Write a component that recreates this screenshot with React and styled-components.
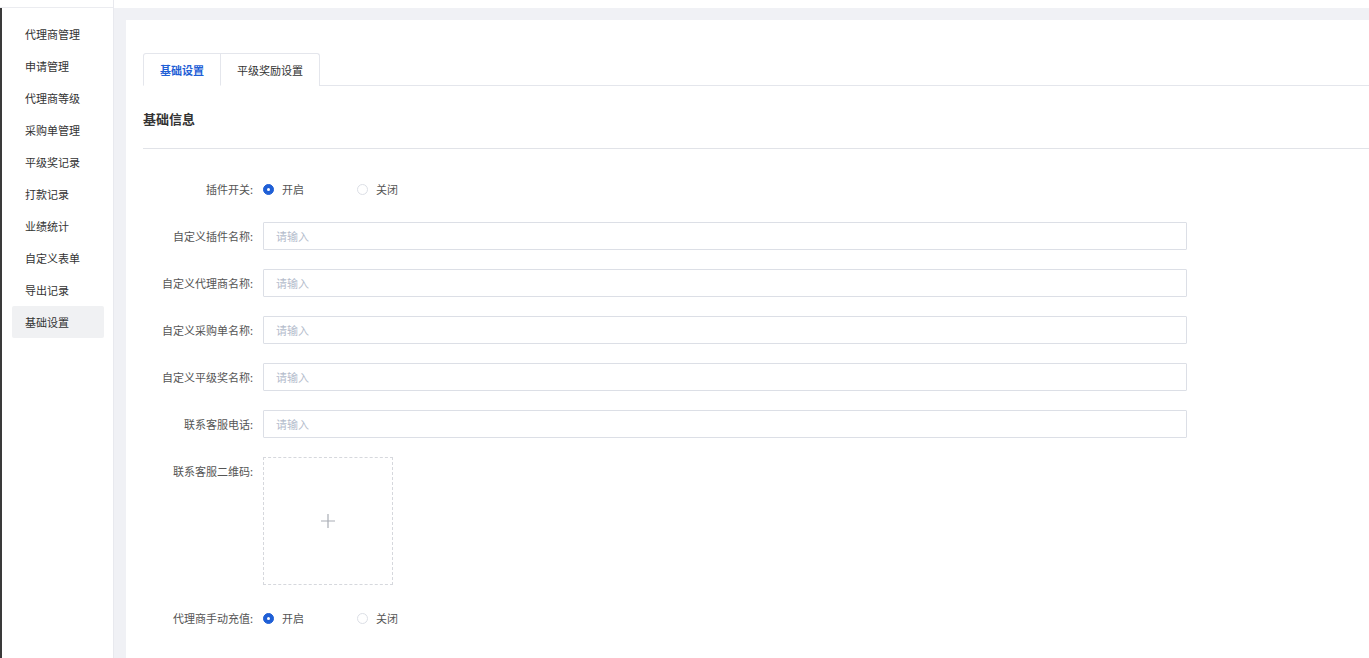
import React, { useState } from 'react';
import styled, { createGlobalStyle } from 'styled-components';

const GlobalStyle = createGlobalStyle`
  html, body {
    margin: 0;
    padding: 0;
    background: #fff;
    font-family: "Noto Sans CJK SC", "Liberation Sans", sans-serif;
    color: #333;
  }
  * { box-sizing: border-box; }
`;

const Page = styled.div`
  display: flex;
  height: 658px;
  overflow: hidden;
`;

const DarkEdge = styled.div`
  width: 2px;
  margin-top: 8px;
  background: #3a3a3a;
  flex-shrink: 0;
`;

const Sidebar = styled.div`
  width: 112px;
  flex-shrink: 0;
  border-right: 1px solid #e8e9ee;
  background: #fff;
`;

const SideHead = styled.div`
  height: 8px;
  border-bottom: 1px solid #ebecf0;
  margin-left: -2px;
`;

const Menu = styled.div`
  padding: 10px 9px 0 10px;
  display: flex;
  flex-direction: column;
`;

const MenuItem = styled.div`
  height: 32px;
  line-height: 32px;
  padding-left: 13px;
  font-size: 11px;
  color: #333;
  border-radius: 2px;
  background: ${p => (p.$active ? '#f0f1f3' : 'transparent')};
`;

const Main = styled.div`
  flex: 1;
  display: flex;
  flex-direction: column;
  min-width: 0;
`;

const TopBar = styled.div`
  height: 8px;
  background: #fff;
`;

const Content = styled.div`
  flex: 1;
  background: #f0f1f5;
  padding: 12px 0 0 12px;
`;

const Card = styled.div`
  background: #fff;
  height: 100%;
  padding: 33px 0 0 17px;
`;

const Tabs = styled.div`
  display: flex;
  border-bottom: 1px solid #e4e6ec;
  height: 33px;
`;

const Tab = styled.div`
  height: 33px;
  padding: 0 16px;
  line-height: 32px;
  font-size: 11px;
  color: ${p => (p.$active ? '#1f5fd6' : '#333')};
  font-weight: ${p => (p.$active ? 600 : 400)};
  border: 1px solid #e4e6ec;
  border-bottom: ${p => (p.$active ? '1px solid #fff' : 'none')};
  border-left: ${p => (p.$first ? '1px solid #e4e6ec' : 'none')};
  border-radius: ${p => (p.$first ? '3px 0 0 0' : '0 3px 0 0')};
  background: #fff;
  margin-bottom: -1px;
`;

const SectionTitle = styled.div`
  height: 63px;
  line-height: 66px;
  font-size: 13px;
  font-weight: 700;
  color: #333;
  border-bottom: 1px solid #e1e3e8;
`;

const Form = styled.div`
  padding-top: 26px;
  display: flex;
  flex-direction: column;
  gap: 19px;
`;

const Row = styled.div`
  display: flex;
  align-items: ${p => (p.$top ? 'flex-start' : 'center')};
  min-height: 28px;
`;

const Label = styled.div`
  width: 120px;
  text-align: right;
  padding-right: 10px;
  font-size: 11px;
  color: #555;
  line-height: 28px;
  flex-shrink: 0;
`;

const RadioGroup = styled.div`
  display: flex;
  align-items: center;
`;

const RadioOption = styled.label`
  display: flex;
  align-items: center;
  width: 94px;
  font-size: 11px;
  color: #555;
  cursor: pointer;
`;

const RadioDot = styled.span`
  width: 11px;
  height: 11px;
  border-radius: 50%;
  margin-right: 8px;
  flex-shrink: 0;
  background: ${p => (p.$checked ? '#1f5fd6' : '#fff')};
  border: 1px solid ${p => (p.$checked ? '#1f5fd6' : '#dcdfe6')};
  display: flex;
  align-items: center;
  justify-content: center;
  &::after {
    content: '';
    width: 3px;
    height: 3px;
    border-radius: 50%;
    background: #fff;
    display: ${p => (p.$checked ? 'block' : 'none')};
  }
`;

const Input = styled.input`
  width: 924px;
  height: 28px;
  border: 1px solid #dcdfe6;
  border-radius: 1px;
  padding: 0 12px;
  font-size: 11px;
  font-family: inherit;
  color: #333;
  outline: none;
  &::placeholder { color: #b4bccc; }
`;

const Upload = styled.div`
  width: 130px;
  height: 128px;
  border: 1px dashed #d6d8dd;
  display: flex;
  align-items: center;
  justify-content: center;
`;

const Radio = ({ value, onChange }) => (
  <RadioGroup>
    <RadioOption onClick={() => onChange(true)}>
      <RadioDot $checked={value} />开启
    </RadioOption>
    <RadioOption onClick={() => onChange(false)}>
      <RadioDot $checked={!value} />关闭
    </RadioOption>
  </RadioGroup>
);

const menu = ['代理商管理', '申请管理', '代理商等级', '采购单管理', '平级奖记录', '打款记录', '业绩统计', '自定义表单', '导出记录', '基础设置'];
const fields = ['自定义插件名称', '自定义代理商名称', '自定义采购单名称', '自定义平级奖名称', '联系客服电话'];

const App = () => {
  const [plugin, setPlugin] = useState(true);
  const [recharge, setRecharge] = useState(true);

  return (
    <Page>
      <GlobalStyle />
      <DarkEdge />
      <Sidebar>
        <SideHead />
        <Menu>
          {menu.map(m => (
            <MenuItem key={m} $active={m === '基础设置'}>{m}</MenuItem>
          ))}
        </Menu>
      </Sidebar>
      <Main>
        <TopBar />
        <Content>
          <Card>
            <Tabs>
              <Tab $active $first>基础设置</Tab>
              <Tab>平级奖励设置</Tab>
            </Tabs>
            <SectionTitle>基础信息</SectionTitle>
            <Form>
              <Row>
                <Label>插件开关:</Label>
                <Radio value={plugin} onChange={setPlugin} />
              </Row>
              {fields.map(f => (
                <Row key={f}>
                  <Label>{f}:</Label>
                  <Input placeholder="请输入" />
                </Row>
              ))}
              <Row $top>
                <Label>联系客服二维码:</Label>
                <Upload>
                  <svg width="14" height="14" viewBox="0 0 14 14">
                    <path d="M7 0v14M0 7h14" stroke="#a9adb5" strokeWidth="1.2" />
                  </svg>
                </Upload>
              </Row>
              <Row>
                <Label>代理商手动充值:</Label>
                <Radio value={recharge} onChange={setRecharge} />
              </Row>
            </Form>
          </Card>
        </Content>
      </Main>
    </Page>
  );
};

export default App;
